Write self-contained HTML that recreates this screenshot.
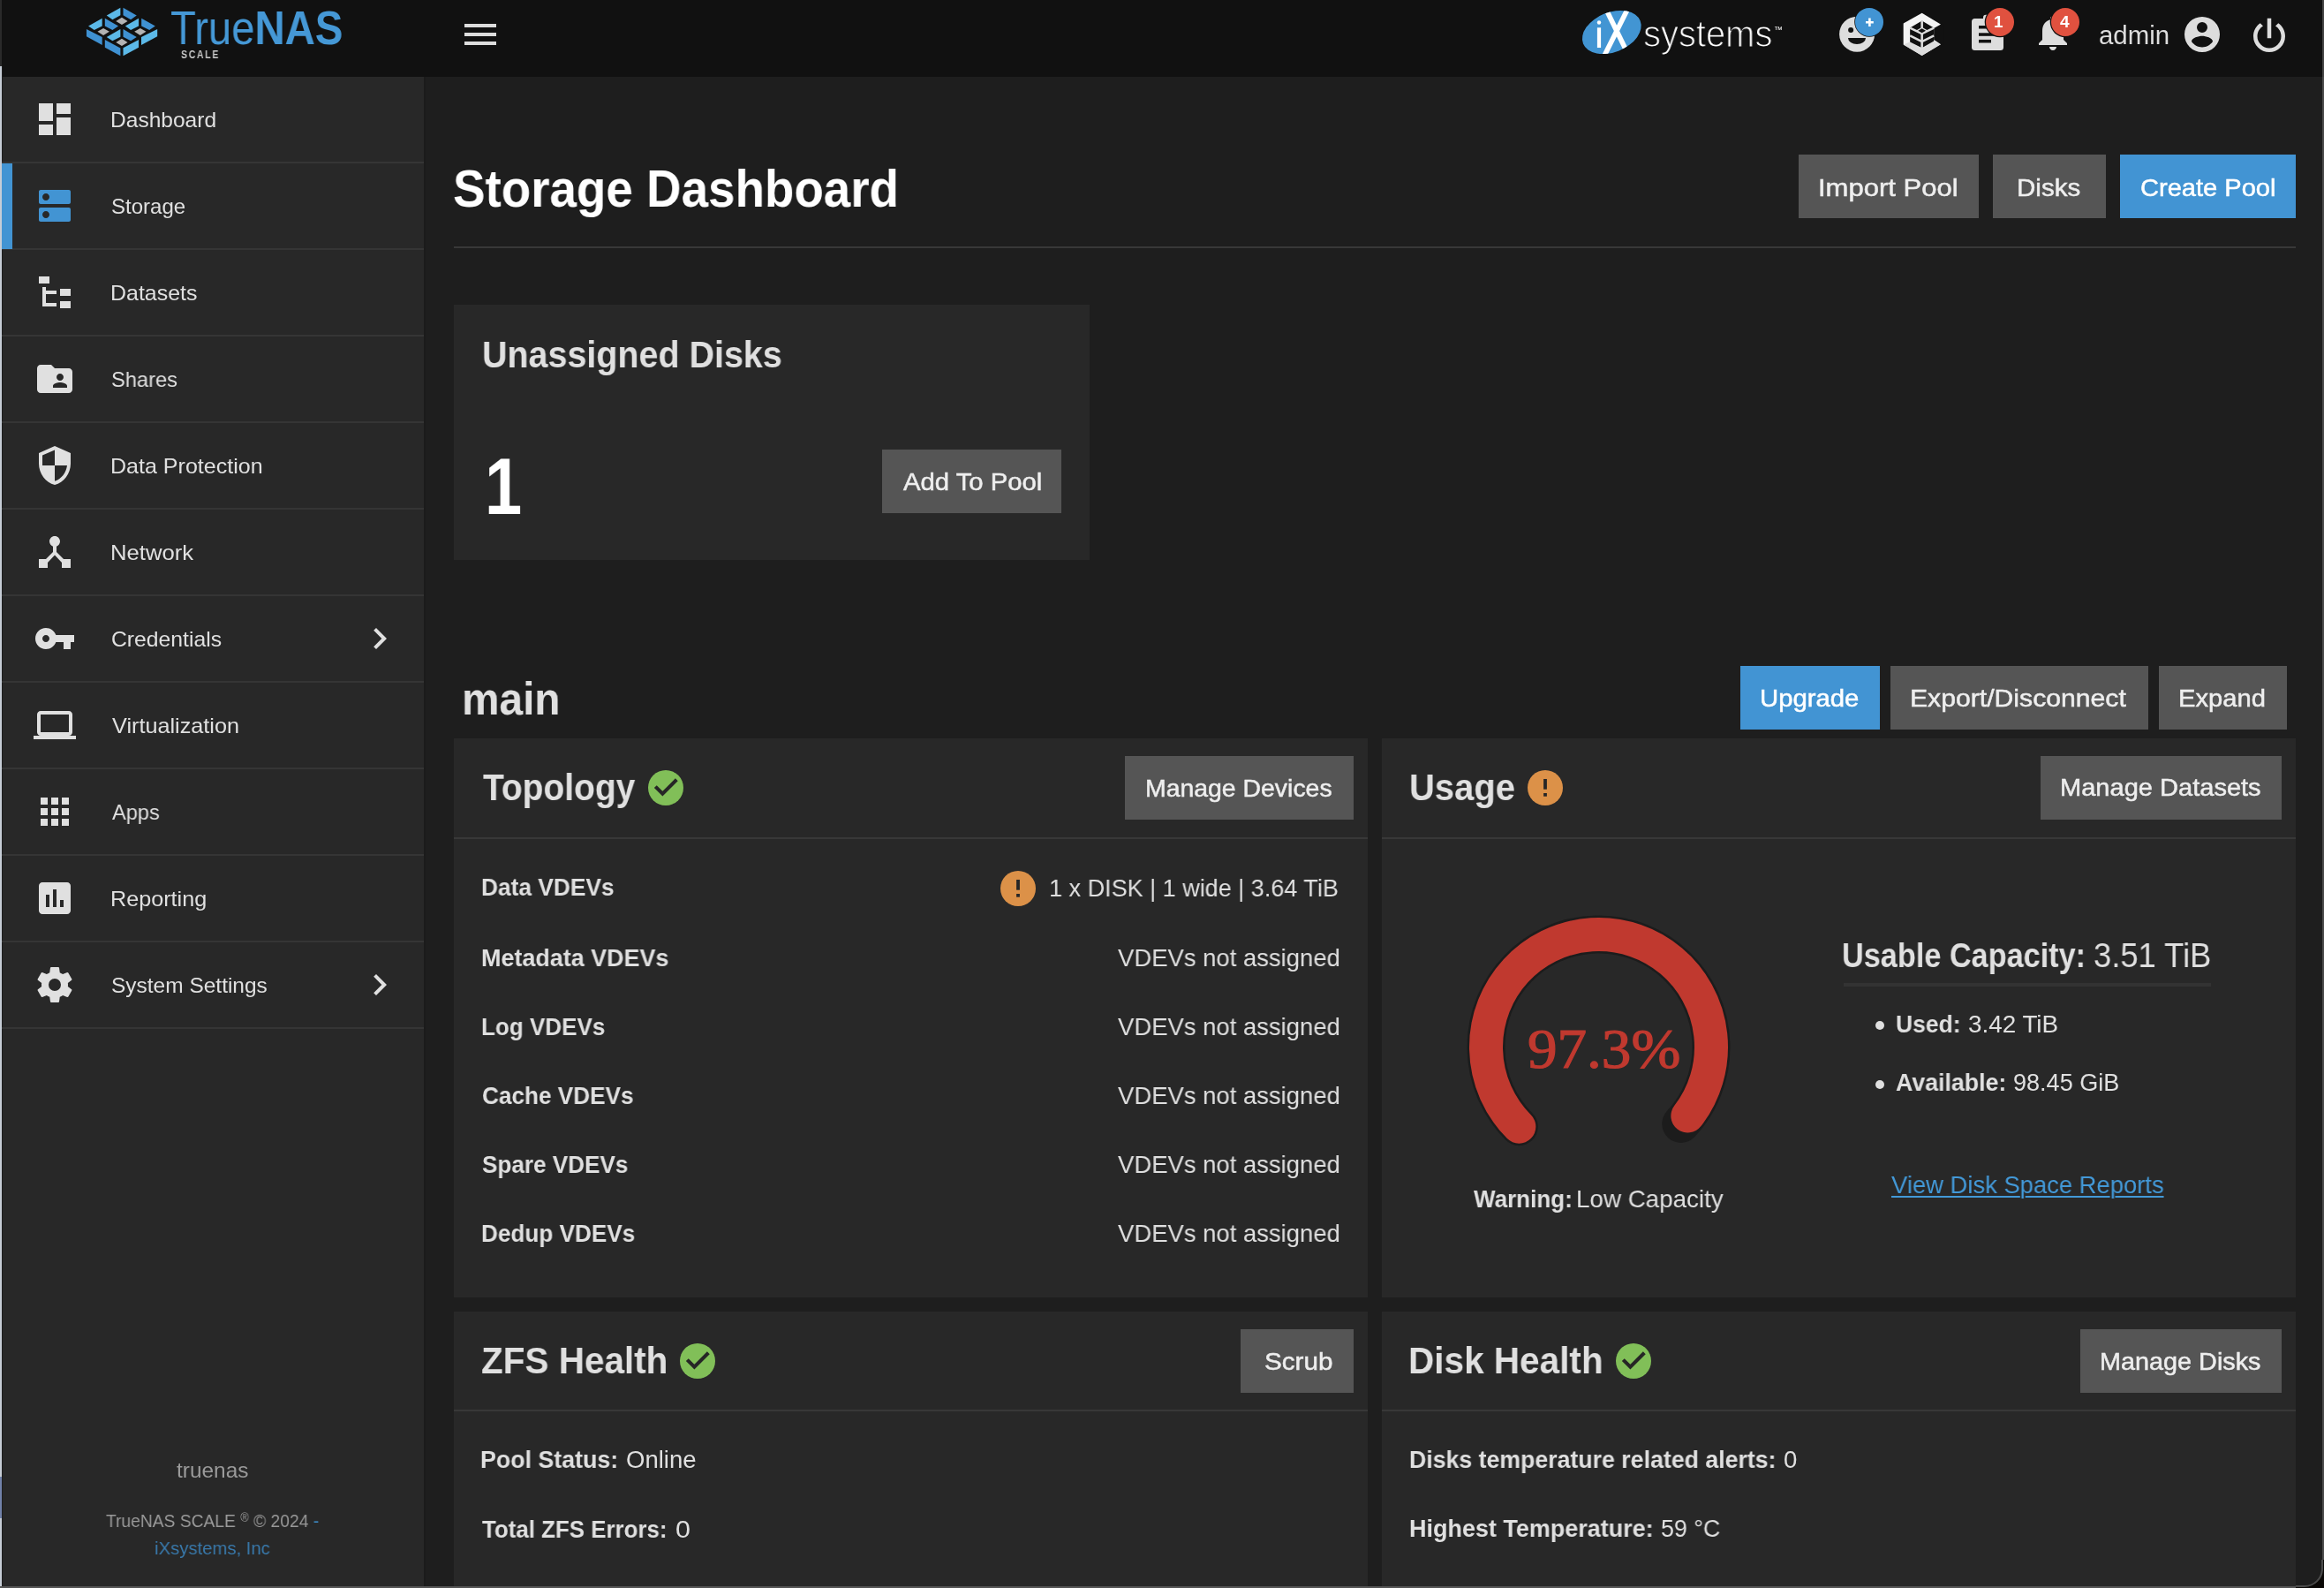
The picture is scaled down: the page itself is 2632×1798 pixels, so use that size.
<!DOCTYPE html>
<html><head><meta charset="utf-8"><title>TrueNAS - Storage</title>
<style>
html,body{margin:0;padding:0;width:2632px;height:1798px;overflow:hidden;background:#1e1e1e;}
body{position:relative;font-family:"Liberation Sans", sans-serif;}
.r{position:absolute;}
.ic{position:absolute;overflow:visible;}
.t{position:absolute;white-space:nowrap;will-change:transform;} b{font-weight:700;}
</style></head><body>
<div class='r' style='left:0px;top:0px;width:2632px;height:1798px;background:#1e1e1e;'></div>
<div class='r' style='left:0px;top:0px;width:2632px;height:87px;background:#111111;'></div>
<div class='r' style='left:2px;top:87px;width:478px;height:1711px;background:#282828;'></div>
<div class='r' style='left:480px;top:87px;width:2px;height:1711px;background:#1b1b1b;'></div>
<div class='r' style='left:0px;top:0px;width:2px;height:75px;background:#2a2a2a;'></div>
<div class='r' style='left:0px;top:75px;width:2px;height:1723px;background:#c6cdd6;'></div>
<div class='r' style='left:0px;top:1672px;width:2px;height:47px;background:#7282aa;'></div>
<div class='r' style='left:2px;top:75px;width:1px;height:1723px;background:#1e1e1e;'></div>
<div class='r' style='left:2630px;top:0px;width:2px;height:87px;background:#444444;'></div>
<div class='r' style='left:2630px;top:87px;width:2px;height:1711px;background:#4b4b4b;'></div>
<div class='r' style='left:0px;top:1796px;width:2632px;height:2px;background:#555555;'></div>
<svg class='ic' style='left:95px;top:5px' width='90' height='62' viewBox='0 0 2305 1588'><polygon fill='#5cb9e8' points='660,320 1060,95 1060,315 830,440'/><polygon fill='#5cb9e8' points='130,630 530,405 530,625 300,745'/><polygon fill='#5cb9e8' points='1200,630 1590,405 1590,625 1360,745'/><polygon fill='#5cb9e8' points='660,945 1060,720 1060,940 830,1055'/><polygon fill='#5cb9e8' points='1665,945 2130,715 2130,930 1665,1175'/><polygon fill='#5cb9e8' points='1140,1260 1590,1025 1590,1250 1140,1490'/><polygon fill='#3f91d2' points='1140,95 1530,320 1360,440 1140,315'/><polygon fill='#3f91d2' points='610,405 1000,630 830,745 610,625'/><polygon fill='#3f91d2' points='1670,405 2070,630 1900,745 1670,625'/><polygon fill='#3f91d2' points='75,715 530,945 530,1175 75,930'/><polygon fill='#3f91d2' points='1140,720 1530,945 1360,1055 1140,940'/><polygon fill='#3f91d2' points='610,1025 1060,1265 1060,1490 610,1250'/><polygon fill='#b3b3b3' points='930,485 1100,380 1270,485 1100,590'/><polygon fill='#b3b3b3' points='395,790 565,690 740,790 565,895'/><polygon fill='#b3b3b3' points='1465,790 1635,690 1805,790 1635,895'/><polygon fill='#b3b3b3' points='930,1100 1100,995 1270,1100 1100,1205'/></svg>
<div class='r' style='left:526px;top:27px;width:36px;height:4px;background:#dddddd;'></div>
<div class='r' style='left:526px;top:37px;width:36px;height:4px;background:#dddddd;'></div>
<div class='r' style='left:526px;top:47px;width:36px;height:4px;background:#dddddd;'></div>
<svg class='ic' style='left:1786px;top:6px' width='80' height='60' viewBox='1786 6 80 60'><defs><clipPath id='ixc'><ellipse cx='1825.3' cy='36.5' rx='34.8' ry='22.5' transform='rotate(-21.8 1825.3 36.5)'/></clipPath></defs><ellipse cx='1825.3' cy='36.5' rx='34.8' ry='22.5' transform='rotate(-21.8 1825.3 36.5)' fill='#4295d3'/><rect x='1808.9' y='31.3' width='4.2' height='22.7' fill='#fff'/><circle cx='1811' cy='25.5' r='2.2' fill='#fff'/><g clip-path='url(#ixc)' stroke='#fff' stroke-width='5.6'><path d='M1817.5 7.6 L1843.3 60.3'/><path d='M1846.3 4.4 L1814.4 68.2'/></g></svg>
<svg class='ic' style='left:2080px;top:5px' width='60' height='60' viewBox='2080 5 60 60'><circle cx='2103.1' cy='38.7' r='20' fill='#dddddd'/><circle cx='2096.1' cy='34' r='3' fill='#111'/><path d='M2093 43 L2113 43 A10 7 0 0 1 2093 43 Z' fill='#111'/><circle cx='2117' cy='24.9' r='16.8' fill='#111'/><circle cx='2117' cy='24.9' r='16' fill='#4294d3'/><path d='M2117.4 20.4 V29.9 M2113 25.2 H2121.8' stroke='#fff' stroke-width='2.6'/></svg>
<svg class='ic' style='left:2150px;top:10px' width='55' height='58' viewBox='0 0 1506 1588'><polygon fill='#f5f5f5' points='730,130 1310,480 1310,1100 730,1450 155,1110 155,455'/><polygon fill='#dddddd' points='155,1110 360,1030 730,1230 1100,1000 1310,1100 730,1450'/><polygon fill='#111' points='1330,470 1100,600 1100,960 1330,1110 1400,1110 1400,470'/><polygon fill='#111' points='360,590 730,370 1100,590 1100,1000 730,1210 360,1030'/><g stroke='#dddddd' stroke-width='70' fill='none'><path d='M730 360 V1215'/><path d='M360 590 L730 770 L1100 590'/><path d='M360 830 L730 1015 L1100 830'/></g><polygon fill='#dddddd' points='540,680 730,570 920,680 730,790'/><polygon fill='#111' points='610,680 730,610 850,680 730,745'/></svg>
<svg class='ic' style='left:2229px;top:14px' width='44' height='46' viewBox='2229 14 44 46'><rect x='2233' y='21' width='36' height='36' rx='3.5' fill='#dddddd'/><rect x='2246' y='16.8' width='10' height='8' rx='3' fill='#dddddd'/><rect x='2241' y='29' width='20' height='3.5' fill='#111'/><rect x='2241' y='37.3' width='20' height='3.5' fill='#111'/><rect x='2241' y='44.9' width='14' height='3.6' fill='#111'/></svg>
<svg class='ic' style='left:2301px;top:13px;' width='48' height='48' viewBox='0 0 24 24' fill='#dddddd'><path d='M12 22c1.1 0 2-.9 2-2h-4c0 1.1.89 2 2 2zm6-6v-5c0-3.07-1.64-5.64-4.5-6.32V4c0-.83-.67-1.5-1.5-1.5s-1.5.67-1.5 1.5v.68C7.63 5.36 6 7.92 6 11v5l-2 2v1h16v-1l-2-2z'/></svg>
<svg class='ic' style='left:2247px;top:7px' width='36' height='36' viewBox='0 0 36 36'><circle cx='18' cy='18' r='17.3' fill='#111'/><circle cx='18' cy='18' r='16' fill='#e0513f'/></svg>
<svg class='ic' style='left:2321px;top:7px' width='36' height='36' viewBox='0 0 36 36'><circle cx='18' cy='18' r='17.3' fill='#111'/><circle cx='18' cy='18' r='16' fill='#e0513f'/></svg>
<svg class='ic' style='left:2470px;top:15px;' width='48' height='48' viewBox='0 0 24 24' fill='#dddddd'><path d='M12,19.2C9.5,19.2 7.29,17.92 6,16C6.03,14 10,12.9 12,12.9C14,12.9 17.97,14 18,16C16.71,17.92 14.5,19.2 12,19.2M12,5A3,3 0 0,1 15,8A3,3 0 0,1 12,11A3,3 0 0,1 9,8A3,3 0 0,1 12,5M12,2A10,10 0 0,0 2,12A10,10 0 0,0 12,22A10,10 0 0,0 22,12A10,10 0 0,0 12,2Z'/></svg>
<svg class='ic' style='left:2543px;top:13.5px;' width='54' height='54' viewBox='0 0 24 24' fill='#dddddd'><path d='M16.56,5.44L15.11,6.89C16.84,7.94 18,9.83 18,12A6,6 0 0,1 12,18A6,6 0 0,1 6,12C6,9.83 7.16,7.94 8.88,6.88L7.44,5.44C5.36,6.88 4,9.28 4,12A8,8 0 0,0 12,20A8,8 0 0,0 20,12C20,9.28 18.64,6.88 16.56,5.44M13,3H11V13H13'/></svg>
<div class='r' style='left:2px;top:183px;width:478px;height:2px;background:#353535;'></div>
<svg class='ic' style='left:38px;top:111px;' width='48' height='48' viewBox='0 0 24 24' fill='#e0e0e0'><path d='M3,13H11V3H3M3,21H11V15H3M13,21H21V11H13M13,3V9H21V3'/></svg>
<div class='r' style='left:2px;top:281px;width:478px;height:2px;background:#353535;'></div>
<svg class='ic' style='left:38px;top:209px;' width='48' height='48' viewBox='0 0 24 24' fill='#4294d3'><path d='M20 13H4c-.55 0-1 .45-1 1v6c0 .55.45 1 1 1h16c.55 0 1-.45 1-1v-6c0-.55-.45-1-1-1zM7 19c-1.1 0-2-.9-2-2s.9-2 2-2 2 .9 2 2-.9 2-2 2zM20 3H4c-.55 0-1 .45-1 1v6c0 .55.45 1 1 1h16c.55 0 1-.45 1-1V4c0-.55-.45-1-1-1zM7 9c-1.1 0-2-.9-2-2s.9-2 2-2 2 .9 2 2-.9 2-2 2z'/></svg>
<div class='r' style='left:2px;top:379px;width:478px;height:2px;background:#353535;'></div>
<svg class='ic' style='left:38px;top:307px;' width='48' height='48' viewBox='0 0 24 24' fill='#e0e0e0'><path d='M3,3H9V7H3V3M15,10H21V14H15V10M15,17H21V21H15V17M13,13H7V18H13V20H7L5,20V9H7V11H13V13Z'/></svg>
<div class='r' style='left:2px;top:477px;width:478px;height:2px;background:#353535;'></div>
<svg class='ic' style='left:38px;top:405px;' width='48' height='48' viewBox='0 0 24 24' fill='#e0e0e0'><path d='M20 6h-8l-2-2H4c-1.1 0-1.99.9-1.99 2L2 18c0 1.1.9 2 2 2h16c1.1 0 2-.9 2-2V8c0-1.1-.9-2-2-2zm-5 3c1.1 0 2 .9 2 2s-.9 2-2 2-2-.9-2-2 .9-2 2-2zm4 8h-8v-1c0-1.330 2.67-2 4-2s4 .67 4 2v1z'/></svg>
<div class='r' style='left:2px;top:575px;width:478px;height:2px;background:#353535;'></div>
<svg class='ic' style='left:38px;top:503px;' width='48' height='48' viewBox='0 0 24 24' fill='#e0e0e0'><path d='M12,12H19C18.47,16.11 15.72,19.78 12,20.92V12H5V6.3L12,3.19M12,1L3,5V11C3,16.55 6.84,21.73 12,23C17.16,21.73 21,16.55 21,11V5L12,1Z'/></svg>
<div class='r' style='left:2px;top:673px;width:478px;height:2px;background:#353535;'></div>
<svg class='ic' style='left:38px;top:601px;' width='48' height='48' viewBox='0 0 24 24' fill='#e0e0e0'><path d='M17 16l-4-4V8.82C14.16 8.4 15 7.3 15 6c0-1.66-1.34-3-3-3S9 4.34 9 6c0 1.3.84 2.4 2 2.82V12l-4 4H3v5h5v-3.05l4-4.2 4 4.2V21h5v-5h-4z'/></svg>
<div class='r' style='left:2px;top:771px;width:478px;height:2px;background:#353535;'></div>
<svg class='ic' style='left:38px;top:699px;' width='48' height='48' viewBox='0 0 24 24' fill='#e0e0e0'><path d='M12.65 10C11.83 7.67 9.610 6 7 6c-3.31 0-6 2.69-6 6s2.69 6 6 6c2.61 0 4.83-1.67 5.65-4H17v4h4v-4h2v-4H12.65zM7 14c-1.1 0-2-.9-2-2s.9-2 2-2 2 .9 2 2-.9 2-2 2z'/></svg>
<svg class='ic' style='left:406px;top:699px;' width='48' height='48' viewBox='0 0 24 24' fill='#e0e0e0'><path d='M10 6L8.59 7.41 13.17 12l-4.58 4.59L10 18l6-6z'/></svg>
<div class='r' style='left:2px;top:869px;width:478px;height:2px;background:#353535;'></div>
<svg class='ic' style='left:38px;top:797px;' width='48' height='48' viewBox='0 0 24 24' fill='#e0e0e0'><path d='M20 18c1.1 0 1.99-.9 1.99-2L22 6c0-1.1-.9-2-2-2H4c-1.1 0-2 .9-2 2v10c0 1.1.9 2 2 2H0v2h24v-2h-4zM4 6h16v10H4V6z'/></svg>
<div class='r' style='left:2px;top:967px;width:478px;height:2px;background:#353535;'></div>
<svg class='ic' style='left:38px;top:895px;' width='48' height='48' viewBox='0 0 24 24' fill='#e0e0e0'><path d='M4 8h4V4H4v4zm6 12h4v-4h-4v4zm-6 0h4v-4H4v4zm0-6h4v-4H4v4zm6 0h4v-4h-4v4zm6-10v4h4V4h-4zm-6 4h4V4h-4v4zm6 6h4v-4h-4v4zm0 6h4v-4h-4v4z'/></svg>
<div class='r' style='left:2px;top:1065px;width:478px;height:2px;background:#353535;'></div>
<svg class='ic' style='left:38px;top:993px;' width='48' height='48' viewBox='0 0 24 24' fill='#e0e0e0'><path d='M19 3H5c-1.1 0-2 .9-2 2v14c0 1.1.9 2 2 2h14c1.1 0 2-.9 2-2V5c0-1.1-.9-2-2-2zM9 17H7v-7h2v7zm4 0h-2V7h2v10zm4 0h-2v-4h2v4z'/></svg>
<div class='r' style='left:2px;top:1163px;width:478px;height:2px;background:#353535;'></div>
<svg class='ic' style='left:38px;top:1091px;' width='48' height='48' viewBox='0 0 24 24' fill='#e0e0e0'><path d='M12,15.5A3.5,3.5 0 0,1 8.5,12A3.5,3.5 0 0,1 12,8.5A3.5,3.5 0 0,1 15.5,12A3.5,3.5 0 0,1 12,15.5M19.43,12.97C19.47,12.65 19.5,12.33 19.5,12C19.5,11.67 19.47,11.34 19.43,11L21.54,9.37C21.73,9.22 21.78,8.95 21.66,8.73L19.66,5.27C19.54,5.05 19.27,4.96 19.05,5.05L16.56,6.05C16.04,5.66 15.5,5.32 14.87,5.07L14.5,2.42C14.46,2.18 14.25,2 14,2H10C9.75,2 9.54,2.18 9.5,2.42L9.13,5.07C8.5,5.32 7.96,5.66 7.44,6.05L4.95,5.05C4.73,4.96 4.46,5.05 4.34,5.27L2.34,8.73C2.21,8.95 2.27,9.22 2.46,9.37L4.570,11C4.53,11.34 4.5,11.67 4.5,12C4.5,12.33 4.53,12.65 4.57,12.97L2.46,14.63C2.27,14.78 2.21,15.05 2.34,15.27L4.34,18.73C4.46,18.95 4.73,19.03 4.95,18.95L7.44,17.94C7.96,18.34 8.5,18.68 9.13,18.93L9.5,21.58C9.54,21.82 9.75,22 10,22H14C14.25,22 14.46,21.820 14.5,21.58L14.87,18.93C15.5,18.67 16.04,18.34 16.56,17.94L19.05,18.95C19.27,19.03 19.54,18.95 19.66,18.73L21.66,15.27C21.78,15.05 21.73,14.78 21.54,14.63L19.43,12.97Z'/></svg>
<svg class='ic' style='left:406px;top:1091px;' width='48' height='48' viewBox='0 0 24 24' fill='#e0e0e0'><path d='M10 6L8.59 7.41 13.17 12l-4.58 4.59L10 18l6-6z'/></svg>
<div class='r' style='left:2px;top:185px;width:12px;height:97px;background:#4294d3;'></div>
<div class='r' style='left:2037px;top:175px;width:204px;height:72px;background:#555555;'></div>
<div class='r' style='left:2257px;top:175px;width:128px;height:72px;background:#555555;'></div>
<div class='r' style='left:2401px;top:175px;width:199px;height:72px;background:#4294d3;'></div>
<div class='r' style='left:514px;top:279px;width:2086px;height:2px;background:#383838;'></div>
<div class='r' style='left:514px;top:345px;width:720px;height:289px;background:#282828;'></div>
<div class='r' style='left:999px;top:509px;width:203px;height:72px;background:#555555;'></div>
<div class='r' style='left:1971px;top:754px;width:158px;height:72px;background:#4294d3;'></div>
<div class='r' style='left:2141px;top:754px;width:292px;height:72px;background:#555555;'></div>
<div class='r' style='left:2445px;top:754px;width:145px;height:72px;background:#555555;'></div>
<div class='r' style='left:514px;top:836px;width:1034.5px;height:633px;background:#282828;'></div>
<svg class='ic' style='left:734px;top:872px' width='40' height='40' viewBox='0 0 40 40'><circle cx='20' cy='20' r='20' fill='#81bf58'/><path d='M8.3 18.6 L16.4 26.6 L32.3 10.8' fill='none' stroke='#262626' stroke-width='4.1'/></svg>
<div class='r' style='left:1274px;top:856px;width:259px;height:72px;background:#555555;'></div>
<div class='r' style='left:514px;top:948px;width:1034.5px;height:2px;background:#383838;'></div>
<svg class='ic' style='left:1132.6px;top:985.7px' width='40' height='40' viewBox='0 0 40 40'><circle cx='20' cy='20' r='20' fill='#dc9148'/><rect x='18.1' y='10' width='3.8' height='11.7' fill='#262626'/><rect x='18.1' y='26' width='3.8' height='3.7' fill='#262626'/></svg>
<div class='r' style='left:1564.5px;top:836px;width:1035.5px;height:633px;background:#282828;'></div>
<svg class='ic' style='left:1730px;top:872px' width='40' height='40' viewBox='0 0 40 40'><circle cx='20' cy='20' r='20' fill='#dc9148'/><rect x='18.1' y='10' width='3.8' height='11.7' fill='#262626'/><rect x='18.1' y='26' width='3.8' height='3.7' fill='#262626'/></svg>
<div class='r' style='left:2311px;top:856px;width:273px;height:72px;background:#555555;'></div>
<div class='r' style='left:1564.5px;top:948px;width:1035.5px;height:2px;background:#383838;'></div>
<svg class='ic' style='left:1640px;top:1020px' width='350' height='300' viewBox='1640 1020 350 300'><path d='M1720.34 1275.66 A127.5 127.5 0 1 1 1903.75 1272.45' fill='none' stroke='#1c1c1c' stroke-width='43' stroke-linecap='round'/><path d='M1720.34 1275.66 A127.5 127.5 0 1 1 1911.37 1263.49' fill='none' stroke='#c0392f' stroke-width='38' stroke-linecap='round'/></svg>
<div class='r' style='left:2088px;top:1113px;width:416px;height:4px;background:#333333;'></div>
<div class='r' style='left:2123.5px;top:1156.0px;width:10px;height:10px;border-radius:5px;background:#e0e0e0'></div>
<div class='r' style='left:2123.5px;top:1222.5px;width:10px;height:10px;border-radius:5px;background:#e0e0e0'></div>
<div class='r' style='left:514px;top:1485px;width:1034.5px;height:311px;background:#282828;'></div>
<svg class='ic' style='left:770px;top:1521px' width='40' height='40' viewBox='0 0 40 40'><circle cx='20' cy='20' r='20' fill='#81bf58'/><path d='M8.3 18.6 L16.4 26.6 L32.3 10.8' fill='none' stroke='#262626' stroke-width='4.1'/></svg>
<div class='r' style='left:1405px;top:1505px;width:128px;height:72px;background:#555555;'></div>
<div class='r' style='left:514px;top:1596px;width:1034.5px;height:2px;background:#383838;'></div>
<div class='r' style='left:1564.5px;top:1485px;width:1035.5px;height:311px;background:#282828;'></div>
<svg class='ic' style='left:1829.5px;top:1521px' width='40' height='40' viewBox='0 0 40 40'><circle cx='20' cy='20' r='20' fill='#81bf58'/><path d='M8.3 18.6 L16.4 26.6 L32.3 10.8' fill='none' stroke='#262626' stroke-width='4.1'/></svg>
<div class='r' style='left:2356px;top:1505px;width:228px;height:72px;background:#555555;'></div>
<div class='r' style='left:1564.5px;top:1596px;width:1035.5px;height:2px;background:#383838;'></div>
<svg class='ic' style='left:2600px;top:1766px' width='32' height='32' viewBox='0 0 32 32'><path d='M32 0 V32 H0 V30 H10 A20 20 0 0 0 30 10 V0 Z' fill='#0a0806'/><path d='M30 0 V10 A20 20 0 0 1 10 30 H0' fill='none' stroke='#4b4b4b' stroke-width='2'/></svg>
<div class='t' style='left:193.00px;top:4.55px;font-size:53px;line-height:53px;font-weight:400;color:#4598d6;font-family:"Liberation Sans", sans-serif;transform:scaleX(0.8926);transform-origin:left top;'>True<b style='font-weight:700'>NAS</b></div>
<div class='t' style='left:205.20px;top:54.95px;font-size:13px;line-height:13px;font-weight:700;color:#cccccc;font-family:"Liberation Sans", sans-serif;transform:scaleX(0.8123);transform-origin:left top;letter-spacing:2px;'>SCALE</div>
<div class='t' style='left:1861.20px;top:16.75px;font-size:43px;line-height:43px;font-weight:400;color:#ffffff;font-family:"Liberation Sans", sans-serif;transform:scaleX(0.9278);transform-origin:left top;-webkit-text-stroke:1.2px #111;'>systems</div>
<div class='t' style='left:2008.50px;top:28.50px;font-size:10px;line-height:10px;font-weight:400;color:#ffffff;font-family:"Liberation Sans", sans-serif;'>™</div>
<div class='t' style='left:2258.00px;top:14.85px;font-size:19px;line-height:19px;font-weight:700;color:#ffffff;font-family:"Liberation Sans", sans-serif;'>1</div>
<div class='t' style='left:2333.00px;top:14.85px;font-size:19px;line-height:19px;font-weight:700;color:#ffffff;font-family:"Liberation Sans", sans-serif;'>4</div>
<div class='t' style='left:2377.00px;top:25.65px;font-size:29px;line-height:29px;font-weight:400;color:#dddddd;font-family:"Liberation Sans", sans-serif;transform:scaleX(1.0132);transform-origin:left top;'>admin</div>
<div class='t' style='left:125.00px;top:123.60px;font-size:24px;line-height:24px;font-weight:400;color:#e0e0e0;font-family:"Liberation Sans", sans-serif;transform:scaleX(1.0228);transform-origin:left top;'>Dashboard</div>
<div class='t' style='left:126.00px;top:221.60px;font-size:24px;line-height:24px;font-weight:400;color:#e0e0e0;font-family:"Liberation Sans", sans-serif;transform:scaleX(1.0013);transform-origin:left top;'>Storage</div>
<div class='t' style='left:125.00px;top:319.60px;font-size:24px;line-height:24px;font-weight:400;color:#e0e0e0;font-family:"Liberation Sans", sans-serif;transform:scaleX(1.0391);transform-origin:left top;'>Datasets</div>
<div class='t' style='left:126.00px;top:417.60px;font-size:24px;line-height:24px;font-weight:400;color:#e0e0e0;font-family:"Liberation Sans", sans-serif;transform:scaleX(0.9865);transform-origin:left top;'>Shares</div>
<div class='t' style='left:125.00px;top:515.60px;font-size:24px;line-height:24px;font-weight:400;color:#e0e0e0;font-family:"Liberation Sans", sans-serif;transform:scaleX(1.0432);transform-origin:left top;'>Data Protection</div>
<div class='t' style='left:125.00px;top:613.60px;font-size:24px;line-height:24px;font-weight:400;color:#e0e0e0;font-family:"Liberation Sans", sans-serif;transform:scaleX(1.0698);transform-origin:left top;'>Network</div>
<div class='t' style='left:126.00px;top:711.60px;font-size:24px;line-height:24px;font-weight:400;color:#e0e0e0;font-family:"Liberation Sans", sans-serif;transform:scaleX(1.0300);transform-origin:left top;'>Credentials</div>
<div class='t' style='left:127.00px;top:809.60px;font-size:24px;line-height:24px;font-weight:400;color:#e0e0e0;font-family:"Liberation Sans", sans-serif;transform:scaleX(1.0515);transform-origin:left top;'>Virtualization</div>
<div class='t' style='left:127.00px;top:907.60px;font-size:24px;line-height:24px;font-weight:400;color:#e0e0e0;font-family:"Liberation Sans", sans-serif;transform:scaleX(0.9834);transform-origin:left top;'>Apps</div>
<div class='t' style='left:125.00px;top:1005.60px;font-size:24px;line-height:24px;font-weight:400;color:#e0e0e0;font-family:"Liberation Sans", sans-serif;transform:scaleX(1.0495);transform-origin:left top;'>Reporting</div>
<div class='t' style='left:126.00px;top:1103.60px;font-size:24px;line-height:24px;font-weight:400;color:#e0e0e0;font-family:"Liberation Sans", sans-serif;transform:scaleX(1.0198);transform-origin:left top;'>System Settings</div>
<div class='t' style='left:200.00px;top:1652.60px;font-size:24px;line-height:24px;font-weight:400;color:#9a9a9a;font-family:"Liberation Sans", sans-serif;transform:scaleX(1.0177);transform-origin:left top;'>truenas</div>
<div class='t' style='left:120.00px;top:1710.55px;font-size:21px;line-height:21px;font-weight:400;color:#9a9a9a;font-family:"Liberation Sans", sans-serif;transform:scaleX(0.9163);transform-origin:left top;'>TrueNAS SCALE <span style='font-size:14px;position:relative;top:-6px'>®</span> © 2024 <span style='color:#3d8ac4'>-</span></div>
<div class='t' style='left:175.00px;top:1742.15px;font-size:21px;line-height:21px;font-weight:400;color:#3979ab;font-family:"Liberation Sans", sans-serif;transform:scaleX(0.9664);transform-origin:left top;'>iXsystems, Inc</div>
<div class='t' style='left:513.00px;top:184.20px;font-size:60px;line-height:60px;font-weight:700;color:#ffffff;font-family:"Liberation Sans", sans-serif;transform:scaleX(0.9124);transform-origin:left top;'>Storage Dashboard</div>
<div class='t' style='left:2059.40px;top:198.60px;font-size:28px;line-height:28px;font-weight:400;color:#eeeeee;font-family:"Liberation Sans", sans-serif;transform:scaleX(1.1086);transform-origin:left top;-webkit-text-stroke:0.5px currentColor;'>Import Pool</div>
<div class='t' style='left:2284.20px;top:198.60px;font-size:28px;line-height:28px;font-weight:400;color:#eeeeee;font-family:"Liberation Sans", sans-serif;transform:scaleX(1.0546);transform-origin:left top;-webkit-text-stroke:0.5px currentColor;'>Disks</div>
<div class='t' style='left:2424.20px;top:198.60px;font-size:28px;line-height:28px;font-weight:400;color:#ffffff;font-family:"Liberation Sans", sans-serif;transform:scaleX(1.0377);transform-origin:left top;-webkit-text-stroke:0.5px currentColor;'>Create Pool</div>
<div class='t' style='left:545.60px;top:380.05px;font-size:43px;line-height:43px;font-weight:700;color:#e0e0e0;font-family:"Liberation Sans", sans-serif;transform:scaleX(0.9172);transform-origin:left top;'>Unassigned Disks</div>
<div class='t' style='left:549.00px;top:505.15px;font-size:91px;line-height:91px;font-weight:700;color:#ffffff;font-family:"Liberation Sans", sans-serif;transform:scaleX(0.8333);transform-origin:left top;'>1</div>
<div class='t' style='left:1023.00px;top:532.20px;font-size:28px;line-height:28px;font-weight:400;color:#eeeeee;font-family:"Liberation Sans", sans-serif;transform:scaleX(1.0456);transform-origin:left top;-webkit-text-stroke:0.5px currentColor;'>Add To Pool</div>
<div class='t' style='left:523.20px;top:765.00px;font-size:52px;line-height:52px;font-weight:700;color:#e0e0e0;font-family:"Liberation Sans", sans-serif;transform:scaleX(0.9191);transform-origin:left top;'>main</div>
<div class='t' style='left:1993.00px;top:776.90px;font-size:28px;line-height:28px;font-weight:400;color:#ffffff;font-family:"Liberation Sans", sans-serif;transform:scaleX(1.0467);transform-origin:left top;-webkit-text-stroke:0.5px currentColor;'>Upgrade</div>
<div class='t' style='left:2163.00px;top:776.90px;font-size:28px;line-height:28px;font-weight:400;color:#eeeeee;font-family:"Liberation Sans", sans-serif;transform:scaleX(1.0774);transform-origin:left top;-webkit-text-stroke:0.5px currentColor;'>Export/Disconnect</div>
<div class='t' style='left:2467.40px;top:776.90px;font-size:28px;line-height:28px;font-weight:400;color:#eeeeee;font-family:"Liberation Sans", sans-serif;transform:scaleX(1.0413);transform-origin:left top;-webkit-text-stroke:0.5px currentColor;'>Expand</div>
<div class='t' style='left:547.00px;top:869.85px;font-size:43px;line-height:43px;font-weight:700;color:#e0e0e0;font-family:"Liberation Sans", sans-serif;transform:scaleX(0.9063);transform-origin:left top;'>Topology</div>
<div class='t' style='left:1297.00px;top:878.60px;font-size:28px;line-height:28px;font-weight:400;color:#eeeeee;font-family:"Liberation Sans", sans-serif;transform:scaleX(1.0146);transform-origin:left top;-webkit-text-stroke:0.5px currentColor;'>Manage Devices</div>
<div class='t' style='left:545.20px;top:992.05px;font-size:27px;line-height:27px;font-weight:700;color:#e0e0e0;font-family:"Liberation Sans", sans-serif;transform:scaleX(0.9744);transform-origin:left top;'>Data VDEVs</div>
<div class='t' style='left:545.20px;top:1071.75px;font-size:27px;line-height:27px;font-weight:700;color:#e0e0e0;font-family:"Liberation Sans", sans-serif;transform:scaleX(0.9971);transform-origin:left top;'>Metadata VDEVs</div>
<div class='t' style='left:545.20px;top:1150.25px;font-size:27px;line-height:27px;font-weight:700;color:#e0e0e0;font-family:"Liberation Sans", sans-serif;transform:scaleX(0.9643);transform-origin:left top;'>Log VDEVs</div>
<div class='t' style='left:546.20px;top:1228.25px;font-size:27px;line-height:27px;font-weight:700;color:#e0e0e0;font-family:"Liberation Sans", sans-serif;transform:scaleX(0.9691);transform-origin:left top;'>Cache VDEVs</div>
<div class='t' style='left:546.20px;top:1306.05px;font-size:27px;line-height:27px;font-weight:700;color:#e0e0e0;font-family:"Liberation Sans", sans-serif;transform:scaleX(0.9669);transform-origin:left top;'>Spare VDEVs</div>
<div class='t' style='left:545.20px;top:1384.05px;font-size:27px;line-height:27px;font-weight:700;color:#e0e0e0;font-family:"Liberation Sans", sans-serif;transform:scaleX(0.9678);transform-origin:left top;'>Dedup VDEVs</div>
<div class='t' style='right:1116.00px;top:991.50px;font-size:28px;line-height:28px;font-weight:400;color:#e0e0e0;font-family:"Liberation Sans", sans-serif;transform:scaleX(0.9644);transform-origin:right top;'>1 x DISK | 1 wide | 3.64 TiB</div>
<div class='t' style='right:1114.00px;top:1070.90px;font-size:28px;line-height:28px;font-weight:400;color:#e0e0e0;font-family:"Liberation Sans", sans-serif;transform:scaleX(0.9804);transform-origin:right top;'>VDEVs not assigned</div>
<div class='t' style='right:1114.00px;top:1149.40px;font-size:28px;line-height:28px;font-weight:400;color:#e0e0e0;font-family:"Liberation Sans", sans-serif;transform:scaleX(0.9804);transform-origin:right top;'>VDEVs not assigned</div>
<div class='t' style='right:1114.00px;top:1227.40px;font-size:28px;line-height:28px;font-weight:400;color:#e0e0e0;font-family:"Liberation Sans", sans-serif;transform:scaleX(0.9804);transform-origin:right top;'>VDEVs not assigned</div>
<div class='t' style='right:1114.00px;top:1305.20px;font-size:28px;line-height:28px;font-weight:400;color:#e0e0e0;font-family:"Liberation Sans", sans-serif;transform:scaleX(0.9804);transform-origin:right top;'>VDEVs not assigned</div>
<div class='t' style='right:1114.00px;top:1383.20px;font-size:28px;line-height:28px;font-weight:400;color:#e0e0e0;font-family:"Liberation Sans", sans-serif;transform:scaleX(0.9804);transform-origin:right top;'>VDEVs not assigned</div>
<div class='t' style='left:1596.20px;top:869.65px;font-size:43px;line-height:43px;font-weight:700;color:#e0e0e0;font-family:"Liberation Sans", sans-serif;transform:scaleX(0.9286);transform-origin:left top;'>Usage</div>
<div class='t' style='left:2333.20px;top:878.30px;font-size:28px;line-height:28px;font-weight:400;color:#eeeeee;font-family:"Liberation Sans", sans-serif;transform:scaleX(1.0373);transform-origin:left top;-webkit-text-stroke:0.5px currentColor;'>Manage Datasets</div>
<div class='t' style='left:1729.60px;top:1156.71px;font-size:63px;line-height:63px;font-weight:400;color:#c0392f;font-family:"Liberation Serif", serif;transform:scaleX(1.0650);transform-origin:left top;-webkit-text-stroke:1.2px currentColor;'>97.3%</div>
<div class='t' style='left:1668.80px;top:1344.20px;font-size:28px;line-height:28px;font-weight:400;color:#e0e0e0;font-family:"Liberation Sans", sans-serif;transform:scaleX(0.9296);transform-origin:left top;'><b>Warning:</b></div>
<div class='t' style='left:1785.40px;top:1344.20px;font-size:28px;line-height:28px;font-weight:400;color:#e0e0e0;font-family:"Liberation Sans", sans-serif;transform:scaleX(0.9918);transform-origin:left top;'>Low Capacity</div>
<div class='t' style='left:2086.20px;top:1063.40px;font-size:38px;line-height:38px;font-weight:400;color:#e0e0e0;font-family:"Liberation Sans", sans-serif;transform:scaleX(0.9015);transform-origin:left top;'><b>Usable Capacity:</b></div>
<div class='t' style='left:2371.40px;top:1063.40px;font-size:38px;line-height:38px;font-weight:400;color:#e0e0e0;font-family:"Liberation Sans", sans-serif;transform:scaleX(0.9564);transform-origin:left top;'>3.51 TiB</div>
<div class='t' style='left:2147.20px;top:1146.55px;font-size:27px;line-height:27px;font-weight:400;color:#e0e0e0;font-family:"Liberation Sans", sans-serif;transform:scaleX(0.9806);transform-origin:left top;'><b>Used:</b></div>
<div class='t' style='left:2147.20px;top:1213.05px;font-size:27px;line-height:27px;font-weight:400;color:#e0e0e0;font-family:"Liberation Sans", sans-serif;transform:scaleX(0.9903);transform-origin:left top;'><b>Available:</b></div>
<div class='t' style='left:2228.80px;top:1146.55px;font-size:27px;line-height:27px;font-weight:400;color:#e0e0e0;font-family:"Liberation Sans", sans-serif;transform:scaleX(1.0309);transform-origin:left top;'>3.42 TiB</div>
<div class='t' style='left:2280.40px;top:1213.05px;font-size:27px;line-height:27px;font-weight:400;color:#e0e0e0;font-family:"Liberation Sans", sans-serif;transform:scaleX(1.0017);transform-origin:left top;'>98.45 GiB</div>
<div class='t' style='left:2141.60px;top:1328.40px;font-size:28px;line-height:28px;font-weight:400;color:#4399d8;font-family:"Liberation Sans", sans-serif;transform:scaleX(0.9785);transform-origin:left top;text-decoration:underline;text-underline-offset:3px;text-decoration-thickness:2px;'>View Disk Space Reports</div>
<div class='t' style='left:545.00px;top:1519.25px;font-size:43px;line-height:43px;font-weight:700;color:#e0e0e0;font-family:"Liberation Sans", sans-serif;transform:scaleX(0.9412);transform-origin:left top;'>ZFS Health</div>
<div class='t' style='left:1431.60px;top:1527.50px;font-size:28px;line-height:28px;font-weight:400;color:#eeeeee;font-family:"Liberation Sans", sans-serif;transform:scaleX(1.0592);transform-origin:left top;-webkit-text-stroke:0.5px currentColor;'>Scrub</div>
<div class='t' style='left:544.00px;top:1640.05px;font-size:27px;line-height:27px;font-weight:400;color:#e0e0e0;font-family:"Liberation Sans", sans-serif;transform:scaleX(0.9915);transform-origin:left top;'><b>Pool Status:</b></div>
<div class='t' style='left:709.20px;top:1640.05px;font-size:27px;line-height:27px;font-weight:400;color:#e0e0e0;font-family:"Liberation Sans", sans-serif;transform:scaleX(1.0198);transform-origin:left top;'>Online</div>
<div class='t' style='left:546.00px;top:1719.05px;font-size:27px;line-height:27px;font-weight:400;color:#e0e0e0;font-family:"Liberation Sans", sans-serif;transform:scaleX(0.9588);transform-origin:left top;'><b>Total ZFS Errors:</b></div>
<div class='t' style='left:765.00px;top:1719.05px;font-size:27px;line-height:27px;font-weight:400;color:#e0e0e0;font-family:"Liberation Sans", sans-serif;transform:scaleX(1.1291);transform-origin:left top;'>0</div>
<div class='t' style='left:1595.20px;top:1519.45px;font-size:43px;line-height:43px;font-weight:700;color:#e0e0e0;font-family:"Liberation Sans", sans-serif;transform:scaleX(0.9419);transform-origin:left top;'>Disk Health</div>
<div class='t' style='left:2378.00px;top:1527.50px;font-size:28px;line-height:28px;font-weight:400;color:#eeeeee;font-family:"Liberation Sans", sans-serif;transform:scaleX(1.0286);transform-origin:left top;-webkit-text-stroke:0.5px currentColor;'>Manage Disks</div>
<div class='t' style='left:1596.20px;top:1640.05px;font-size:27px;line-height:27px;font-weight:400;color:#e0e0e0;font-family:"Liberation Sans", sans-serif;transform:scaleX(0.9885);transform-origin:left top;'><b>Disks temperature related alerts:</b></div>
<div class='t' style='left:2020.20px;top:1640.05px;font-size:27px;line-height:27px;font-weight:400;color:#e0e0e0;font-family:"Liberation Sans", sans-serif;transform:scaleX(1.0204);transform-origin:left top;'>0</div>
<div class='t' style='left:1596.20px;top:1718.45px;font-size:27px;line-height:27px;font-weight:400;color:#e0e0e0;font-family:"Liberation Sans", sans-serif;transform:scaleX(0.9985);transform-origin:left top;'><b>Highest Temperature:</b></div>
<div class='t' style='left:1881.00px;top:1718.45px;font-size:27px;line-height:27px;font-weight:400;color:#e0e0e0;font-family:"Liberation Sans", sans-serif;transform:scaleX(0.9925);transform-origin:left top;'>59 °C</div>
</body></html>
